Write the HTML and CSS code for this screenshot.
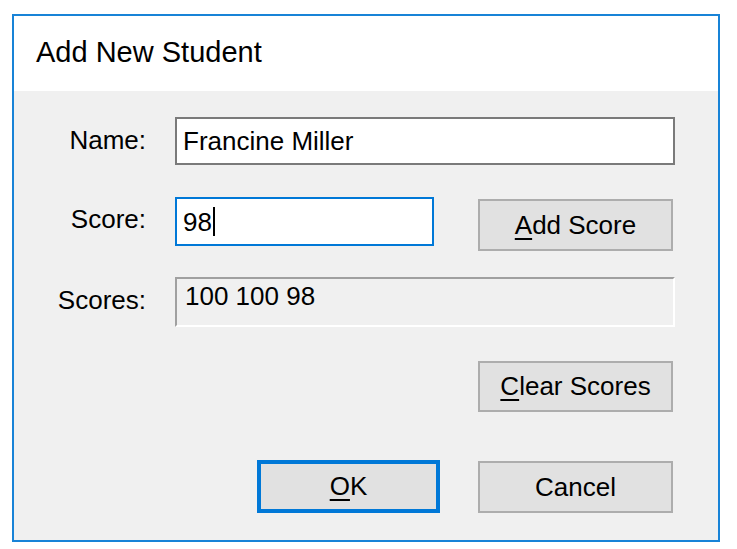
FILE: index.html
```html
<!DOCTYPE html>
<html>
<head>
<meta charset="utf-8">
<title>Add New Student</title>
<link rel="stylesheet" href="styles.css">
</head>
<body>
<div class="dialog">
  <div class="titlebar"><span class="title">Add New Student</span></div>
  <div class="content">
    <div class="row row-name">
      <div class="label">Name:</div>
      <div class="textbox wide">Francine Miller</div>
    </div>
    <div class="row row-score">
      <div class="label">Score:</div>
      <div class="textbox short focused">98<span class="caret"></span></div>
      <div class="button add-score"><u>A</u>dd Score</div>
    </div>
    <div class="row row-scores">
      <div class="label">Scores:</div>
      <div class="readonly">100 100 98</div>
    </div>
    <div class="row row-clear">
      <div class="button clear"><u>C</u>lear Scores</div>
    </div>
    <div class="row row-actions">
      <div class="button ok"><u>O</u>K</div>
      <div class="button cancel">Cancel</div>
    </div>
  </div>
</div>
</body>
</html>
```

FILE: styles.css
```css
html, body {
  margin: 0;
  padding: 0;
  background: #ffffff;
}
body {
  font-family: "Liberation Sans", Arial, sans-serif;
  color: #000000;
}
.dialog {
  margin: 14px 0 0 12px;
  width: 704px;
  height: 524px;
  border: 2px solid #1883d7;
  background: #f0f0f0;
  display: flex;
  flex-direction: column;
}
.titlebar {
  height: 75px;
  background: #ffffff;
  display: flex;
  align-items: center;
  padding-left: 22px;
  flex: none;
}
.title {
  font-size: 29px;
  margin-top: -2px;
}
.content {
  padding-top: 26px;
  font-size: 26px;
}
.row {
  display: flex;
  align-items: flex-start;
}
.label {
  width: 132px;
  margin-right: 29px;
  text-align: right;
  line-height: 30px;
}
.row-name .label { margin-top: 8px; }
.row-score { margin-top: 32px; }
.row-score .label { margin-top: 7px; }
.row-scores { margin-top: 26px; }
.row-scores .label { margin-top: 8px; }
.row-clear { margin-top: 34px; padding-left: 464px; }
.row-actions { margin-top: 48px; padding-left: 243px; }

.textbox {
  box-sizing: border-box;
  height: 48px;
  border: 2px solid #7a7a7a;
  background: #ffffff;
  padding-left: 6px;
  line-height: 44px;
  display: flex;
  align-items: center;
  white-space: nowrap;
}
.textbox.wide { width: 500px; }
.textbox.short { width: 259px; height: 49px; }
.textbox.focused { border-color: #0078d7; }
.caret {
  display: inline-block;
  width: 2px;
  height: 29px;
  background: #000000;
  margin-left: 1px;
}
.readonly {
  box-sizing: border-box;
  width: 500px;
  height: 50px;
  border-style: solid;
  border-width: 2px;
  border-color: #a0a0a0 #ffffff #ffffff #a0a0a0;
  background: #f0f0f0;
  padding: 3px 0 0 8px;
  line-height: 28px;
}
.button {
  box-sizing: border-box;
  width: 195px;
  height: 52px;
  border: 2px solid #adadad;
  background: #e1e1e1;
  display: flex;
  align-items: center;
  justify-content: center;
  white-space: nowrap;
}
.button u {
  text-decoration-thickness: 2px;
  text-underline-offset: 4px;
}
.add-score { margin-left: 44px; margin-top: 2px; }
.clear { height: 51px; }
.ok {
  width: 183px;
  height: 53px;
  border: 4px solid #0078d7;
}
.cancel { margin-left: 38px; margin-top: 1px; }
```
